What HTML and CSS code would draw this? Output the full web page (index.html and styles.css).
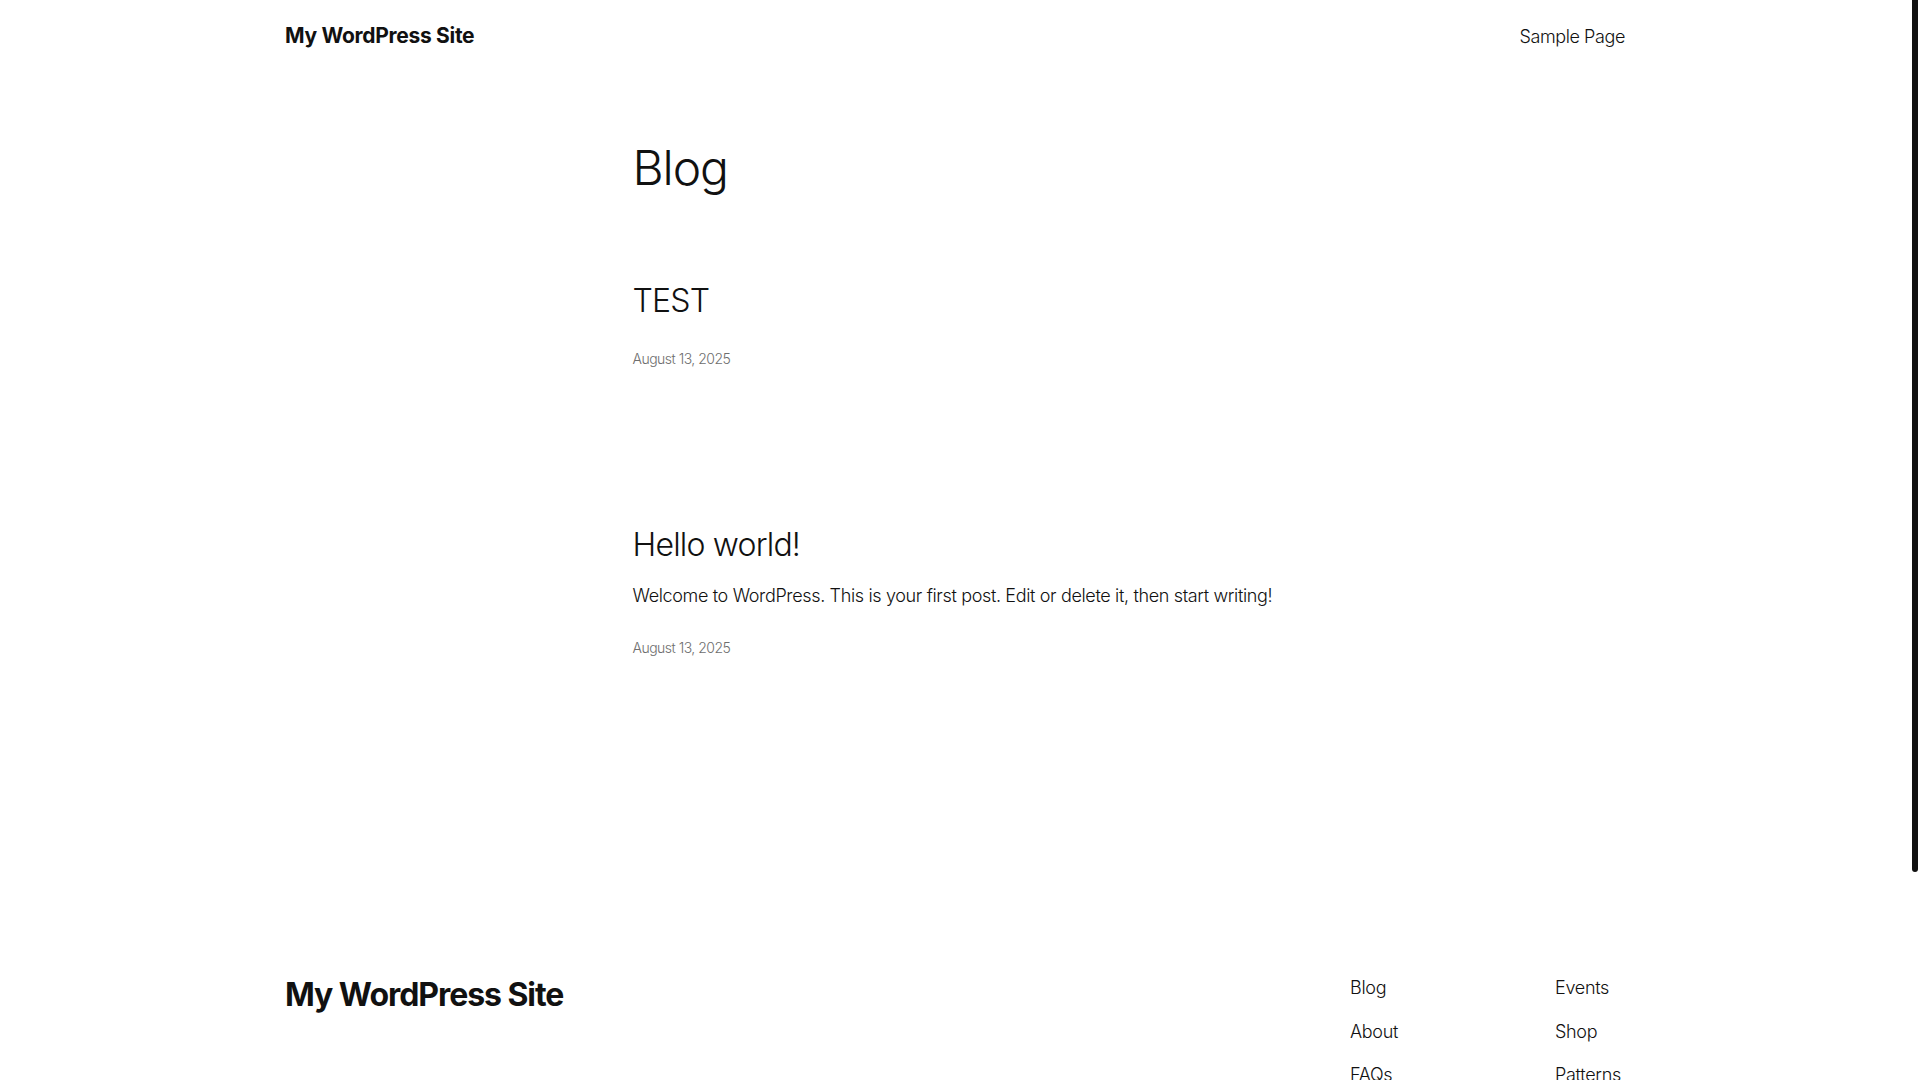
FILE: index.html
```html
<!DOCTYPE html>
<html lang="en">
<head>
<meta charset="utf-8">
<title>Blog – My WordPress Site</title>
<link rel="stylesheet" href="styles.css">
</head>
<body>
<div class="page">
<header class="site-header">
  <div class="wide header-row">
    <a class="site-title" href="#">My WordPress Site</a>
    <nav class="header-nav"><a href="#">Sample Page</a></nav>
  </div>
</header>
<main class="site-main">
  <div class="content">
    <h1 class="page-title">Blog</h1>
    <ul class="posts">
      <li class="post post-first">
        <h2 class="post-title"><a href="#">TEST</a></h2>
        <time class="post-date">August 13, 2025</time>
      </li>
      <li class="post post-second">
        <h2 class="post-title"><a href="#">Hello world!</a></h2>
        <p class="post-excerpt">Welcome to WordPress. This is your first post. Edit or delete it, then start writing!</p>
        <time class="post-date">August 13, 2025</time>
      </li>
    </ul>
  </div>
</main>
<footer class="site-footer">
  <div class="wide footer-row">
    <a class="footer-title" href="#">My WordPress Site</a>
    <div class="footer-navs">
      <ul class="footer-nav">
        <li><a href="#">Blog</a></li>
        <li><a href="#">About</a></li>
        <li><a href="#">FAQs</a></li>
        <li><a href="#">Authors</a></li>
      </ul>
      <ul class="footer-nav">
        <li><a href="#">Events</a></li>
        <li><a href="#">Shop</a></li>
        <li><a href="#">Patterns</a></li>
        <li><a href="#">Themes</a></li>
      </ul>
    </div>
  </div>
  <div class="wide footer-bottom">
    <p class="credit">Twenty Twenty-Five</p>
    <p class="credit">Designed with <a href="#">WordPress</a></p>
  </div>
</footer>
</div>
<div class="scrollbar" aria-hidden="true"><div class="scrollbar-thumb"></div></div>
</body>
</html>
```
FILE: styles.css
```css
html,
body {
  height: 100%;
  margin: 0;
  overflow: hidden;
  background: #ffffff;
}
body {
  display: flex;
  align-items: flex-start;
  color: #111111;
  font-family: "Inter", "Noto Sans", sans-serif;
  font-weight: 300;
  font-size: 18px;
  line-height: 1.4;
  letter-spacing: -0.1px;
}
.page {
  flex: 1;
  min-width: 0;
  background: #ffffff;
}
.scrollbar {
  flex: 0 0 10px;
  height: 100vh;
  background: #ffffff;
  display: flex;
  justify-content: center;
}
.scrollbar-thumb {
  width: 6px;
  height: 872px;
  background: #111111;
  border-radius: 0 0 3px 3px;
}
a {
  color: inherit;
  text-decoration: none;
}
.wide {
  max-width: 1340px;
  margin: 0 auto;
}
.site-header {
  padding: 20px 0;
}
.header-row {
  display: flex;
  justify-content: space-between;
  align-items: baseline;
}
.site-title {
  font-size: 21px;
  font-weight: 700;
  line-height: 31px;
  letter-spacing: -0.3px;
}
.header-nav a {
  font-size: 18px;
  font-weight: 300;
  letter-spacing: -0.4px;
}
.site-main {
  padding-top: 70px;
}
.content {
  max-width: 645px;
  margin: 0 auto;
}
.page-title {
  margin: 0 0 87px;
  font-size: 48px;
  font-weight: 300;
  line-height: 54px;
  letter-spacing: -1.1px;
}
.posts {
  list-style: none;
  margin: 0;
  padding: 0;
}
.post {
  display: flex;
  flex-direction: column;
  align-items: flex-start;
}
.post-second {
  margin-top: 157px;
}
.post-title {
  margin: 0;
  font-size: 32px;
  font-weight: 300;
  line-height: 38.4px;
  letter-spacing: -0.8px;
}
.post-first .post-date {
  margin-top: 28px;
}
.post-excerpt {
  margin: 18px 0 0;
  font-size: 18px;
  line-height: 25.2px;
  letter-spacing: -0.35px;
}
.post-second .post-date {
  margin-top: 29px;
}
.post-date {
  font-size: 14px;
  line-height: 21px;
  color: #6e6e6e;
  letter-spacing: -0.5px;
}
.site-footer {
  padding-top: 315px;
  padding-bottom: 65px;
}
.footer-row {
  display: flex;
  justify-content: space-between;
  align-items: flex-start;
}
.footer-title {
  margin-top: 3px;
  font-size: 32px;
  font-weight: 700;
  line-height: 38.4px;
  letter-spacing: -1.05px;
}
.footer-navs {
  display: grid;
  grid-template-columns: 205px 70px;
  margin-top: 2px;
}
.footer-nav {
  list-style: none;
  margin: 0;
  padding: 0;
  display: flex;
  flex-direction: column;
  gap: 18.3px;
  white-space: nowrap;
}
.footer-nav a {
  font-size: 18px;
  line-height: 25.2px;
  letter-spacing: -0.3px;
}
.footer-bottom {
  display: flex;
  justify-content: space-between;
  margin-top: 90px;
  padding-top: 30px;
  border-top: 1px solid #e4e4e4;
}
.credit {
  margin: 0;
  font-size: 14px;
  color: #111111;
}
.credit a {
  text-decoration: underline;
}
```
